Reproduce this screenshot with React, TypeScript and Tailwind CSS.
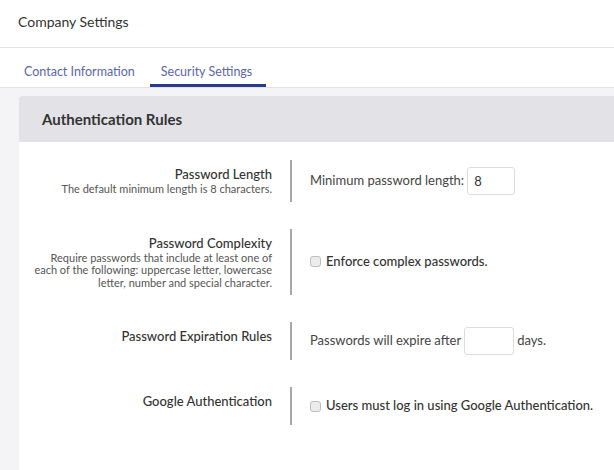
import React from 'react'

// ── Row ───────────────────────────────────────────────────────────────────────
function Row({ title, desc, children }: { title: string; desc?: React.ReactNode; children: React.ReactNode }) {
  return (
    <div className="flex">
      <div className="w-[271px] shrink-0 pr-[18px] py-[6px] text-right">
        <p className="text-[13px] leading-4 font-medium text-[#333]">{title}</p>
        {desc && <p className="mt-[1px] text-[11px] leading-[12.5px] text-[#555]">{desc}</p>}
      </div>
      <div className="flex items-center min-h-[38px] border-l-2 border-[#a8a8a8] pl-[18px] py-[5px] text-[13px] text-[#444] whitespace-nowrap">
        {children}
      </div>
    </div>
  )
}

function Check({ label }: { label: string }) {
  return (
    <label className="flex items-center gap-[5px] font-medium text-[#333]">
      <span className="inline-block w-[11px] h-[11px] rounded-[3px] border border-[#bdbdbd] bg-[#ececec]" />
      {label}
    </label>
  )
}

export default function App() {
  return (
    <div className="w-[614px] h-[470px] overflow-hidden bg-white flex flex-col" style={{ fontFamily: 'Lato, "Liberation Sans", Arial, sans-serif' }}>
      {/* top bar */}
      <div className="h-[48px] shrink-0 border-b border-[#e4e4e4] px-[18px] pb-[4px] flex items-center">
        <h1 className="text-[14px] text-[#333]">Company Settings</h1>
      </div>

      {/* tabs */}
      <div className="h-[40px] shrink-0 border-b border-[#e2e2e4] flex items-end pl-[13px] gap-[4px]">
        <button className="px-[11px] pt-[8px] h-[34px] border-b-[3px] border-transparent text-[12.5px] text-[#5b66ad]">Contact Information</button>
        <button className="pl-[11px] pr-[14px] pt-[8px] h-[34px] border-b-[3px] border-[#2b3a8f] text-[12.5px] text-[#5b66ad]">Security Settings</button>
      </div>

      {/* content */}
      <div className="flex-1 bg-[#f4f4f6] pl-[19px] pt-[8px]">
        <div className="h-full bg-white rounded-tl-[3px] overflow-hidden">
          <div className="h-[46px] bg-[#e3e3e7] pl-[23px] flex items-center">
            <h2 className="text-[15px] font-bold text-[#333]">Authentication Rules</h2>
          </div>

          <div className="pt-[18px] flex flex-col gap-[27px]">
            <Row title="Password Length" desc="The default minimum length is 8 characters.">
              <span>Minimum password length:</span>
              <input defaultValue="8" className="ml-[3px] w-[48px] h-[28px] rounded-[3px] border border-[#dcdcdc] px-[6px] text-[13px] text-[#333] outline-none" />
            </Row>

            <Row title="Password Complexity" desc={<>Require passwords that include at least one of<br />each of the following: uppercase letter, lowercase<br />letter, number and special character.</>}>
              <Check label="Enforce complex passwords." />
            </Row>

            <Row title="Password Expiration Rules">
              <span>Passwords will expire after</span>
              <input className="mx-[3px] w-[50px] h-[28px] rounded-[3px] border border-[#dcdcdc] px-[6px] text-[13px] outline-none" />
              <span>days.</span>
            </Row>

            <Row title="Google Authentication">
              <Check label="Users must log in using Google Authentication." />
            </Row>
          </div>
        </div>
      </div>
    </div>
  )
}
